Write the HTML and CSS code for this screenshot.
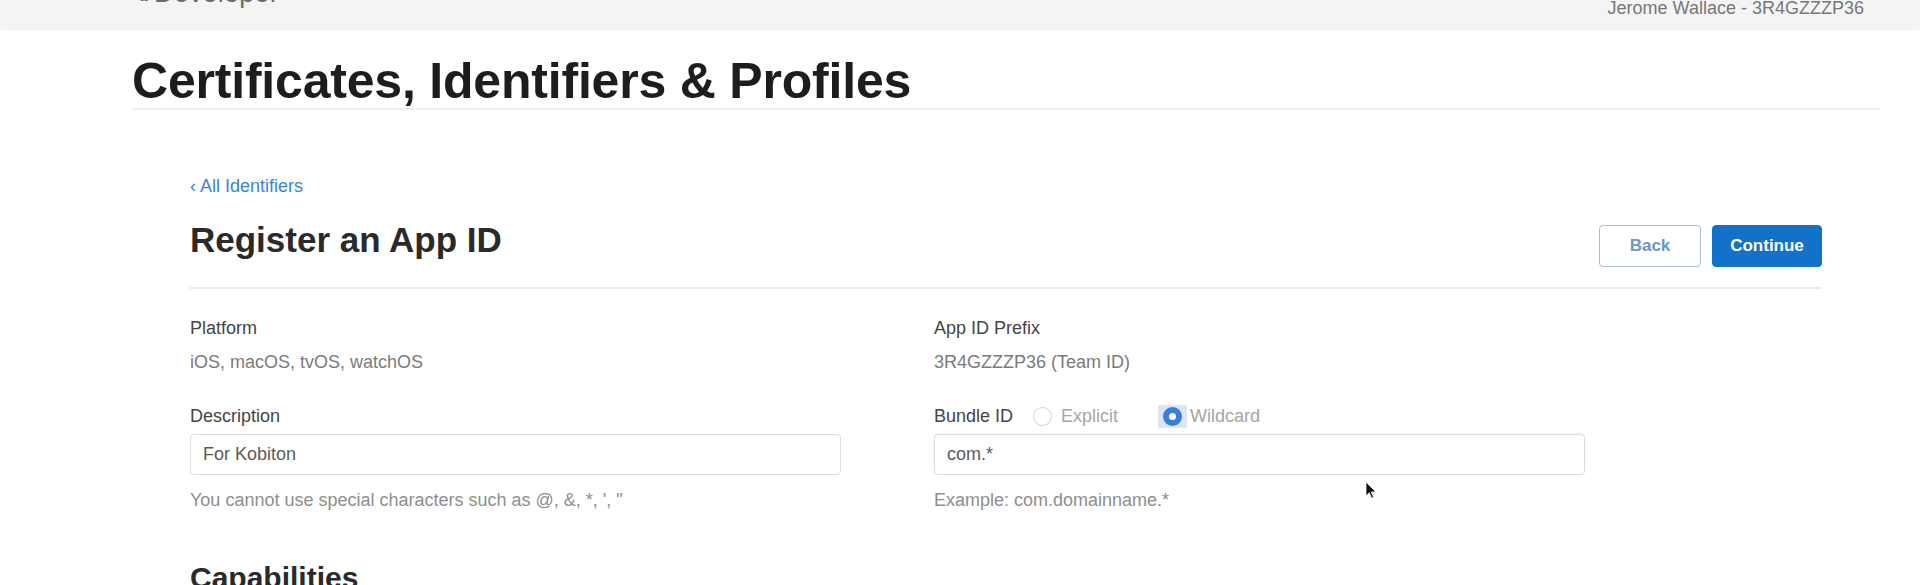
FILE: index.html
```html
<!DOCTYPE html>
<html lang="en">
<head>
<meta charset="utf-8">
<title>Certificates, Identifiers &amp; Profiles</title>
<link rel="stylesheet" href="styles.css">
</head>
<body>
<header class="topbar">
  <div class="brand">
    <svg class="brand-logo" viewBox="0 0 14 17" width="12" height="15"><path d="M11.6 9.1c0-2 1.7-3 1.8-3-1-1.4-2.5-1.6-3-1.6-1.3-.1-2.5.8-3.2.8-.7 0-1.7-.8-2.8-.7C3 4.6 1.7 5.4 1 6.7c-1.5 2.6-.4 6.4 1 8.5.7 1 1.5 2.1 2.6 2.1 1 0 1.4-.7 2.7-.7 1.2 0 1.6.7 2.7.7 1.1 0 1.8-1 2.5-2.1.8-1.2 1.1-2.3 1.1-2.4 0 0-2-.8-2-3.2zM9.6 3.1c.6-.7 1-1.7.9-2.7-.8 0-1.9.6-2.5 1.3-.5.6-1 1.6-.9 2.6.9.1 1.9-.5 2.5-1.2z" fill="#6b6b6b"/></svg>
    <span class="brand-name">Developer</span>
  </div>
  <div class="account">Jerome Wallace - 3R4GZZZP36</div>
</header>

<main class="page">
  <h1 class="page-title">Certificates, Identifiers &amp; Profiles</h1>

  <section class="panel">
    <a class="back-link" href="#"><span class="chev">‹</span> All Identifiers</a>

    <div class="panel-head">
      <h2 class="panel-title">Register an App ID</h2>
      <div class="actions">
        <button class="btn btn-secondary" type="button">Back</button>
        <button class="btn btn-primary" type="button">Continue</button>
      </div>
    </div>

    <div class="form-grid">
      <div class="field">
        <div class="label">Platform</div>
        <div class="value">iOS, macOS, tvOS, watchOS</div>
      </div>
      <div class="field">
        <div class="label">App ID Prefix</div>
        <div class="value">3R4GZZZP36 (Team ID)</div>
      </div>

      <div class="field field-input">
        <div class="label label-row">Description</div>
        <div class="input">For Kobiton</div>
        <div class="help">You cannot use special characters such as @, &amp;, *, ', "</div>
      </div>
      <div class="field field-input">
        <div class="label label-row">
          <span>Bundle ID</span>
          <span class="radio-opt radio-explicit"><span class="radio"></span><span class="radio-text">Explicit</span></span>
          <span class="radio-opt radio-wildcard"><span class="radio-focus"><span class="radio radio-on"></span></span><span class="radio-text">Wildcard</span></span>
        </div>
        <div class="input input-focus">com.*</div>
        <div class="help">Example: com.domainname.*</div>
      </div>
    </div>

    <h3 class="section-title">Capabilities</h3>
  </section>

  <svg class="cursor" viewBox="0 0 12 19" width="12" height="19"><path d="M1 1 L1 15 L4.3 11.8 L6.6 17.2 L8.6 16.3 L6.4 11 L11 11 Z" fill="#111" stroke="#fff" stroke-width="0.8"/></svg>
</main>
</body>
</html>
```

FILE: styles.css
```css
html, body {
  margin: 0;
  padding: 0;
  background: #ffffff;
}

body {
  font-family: "Liberation Sans", Arial, Helvetica, sans-serif;
  color: #333;
  height: 585px;
  overflow: hidden;
}

.topbar {
  height: 30px;
  background: #f4f4f4;
  display: flex;
  justify-content: space-between;
  align-items: flex-start;
  padding: 0 56px 0 138px;
  overflow: hidden;
  box-shadow: 0 1px 2px rgba(0,0,0,0.03);
}

.brand {
  display: flex;
  align-items: flex-end;
  gap: 4px;
  margin-top: -21px;
  height: 28px;
  line-height: 28px;
}

.brand-logo {
  margin-bottom: 6px;
}

.brand-name {
  font-size: 27px;
  color: #6b6b6b;
  letter-spacing: 0.2px;
}

.account {
  font-size: 18px;
  line-height: 18px;
  margin-top: -1px;
  color: #777;
}

.page {
  position: relative;
  padding: 24px 40px 0 132px;
}

.page-title {
  margin: 0;
  font-size: 50px;
  line-height: 54px;
  font-weight: 700;
  color: #1d1d1f;
  border-bottom: 2px solid #eeeeee;
  letter-spacing: -0.2px;
}

.panel {
  padding: 0 58px;
}

.back-link {
  display: block;
  margin-top: 66px;
  font-size: 18px;
  line-height: 20px;
  color: #3b86d4;
  text-decoration: none;
}

.panel-head {
  margin-top: 23px;
  display: flex;
  justify-content: space-between;
  align-items: flex-start;
  padding-bottom: 20px;
  border-bottom: 2px solid #ececec;
}

.panel-title {
  margin: 0;
  font-size: 35px;
  line-height: 42px;
  font-weight: 700;
  color: #2a2a2a;
}

.actions {
  display: flex;
  gap: 11px;
  margin-top: 6px;
}

.btn {
  height: 42px;
  border-radius: 4px;
  font-family: "Liberation Sans", Arial, sans-serif;
  font-size: 17px;
  font-weight: 700;
  padding: 0;
  cursor: pointer;
}

.btn-secondary {
  width: 102px;
  background: #ffffff;
  border: 1px solid #a9bcd8;
  color: #6f95cb;
}

.btn-primary {
  width: 110px;
  background: #1271c8;
  border: 1px solid #1271c8;
  color: #ffffff;
}

.form-grid {
  display: grid;
  grid-template-columns: 744px 1fr;
  margin-top: 28px;
  row-gap: 32px;
}

.label {
  font-size: 18px;
  line-height: 22px;
  color: #444;
}

.value {
  margin-top: 12px;
  font-size: 18px;
  line-height: 22px;
  color: #7b7b7b;
}

.label-row {
  display: flex;
  align-items: center;
  height: 22px;
}

.radio-opt {
  display: flex;
  align-items: center;
}

.radio-explicit {
  margin-left: 20px;
}

.radio-wildcard {
  margin-left: 40px;
}

.radio {
  box-sizing: border-box;
  display: block;
  width: 19px;
  height: 19px;
  border-radius: 50%;
  border: 1px solid #d2d2d2;
  background: #fff;
}

.radio-on {
  border: 6px solid #3a7fd6;
  background: #ffffff;
}

.radio-focus {
  display: flex;
  align-items: center;
  justify-content: center;
  width: 29px;
  height: 23px;
  background: #dae6f8;
  border-radius: 2px;
}

.radio-text {
  color: #a6a6a6;
  font-size: 18px;
}

.radio-explicit .radio-text {
  margin-left: 9px;
}

.radio-wildcard .radio-text {
  margin-left: 3px;
}

.input {
  box-sizing: border-box;
  margin-top: 7px;
  width: 651px;
  height: 41px;
  border: 1px solid #dcdcdc;
  border-radius: 4px;
  padding: 0 12px;
  font-size: 18px;
  line-height: 39px;
  color: #5a5a5a;
  background: #fff;
}

.input-focus {
  box-shadow: 0 -1px 2px rgba(90, 150, 230, 0.12);
}

.help {
  margin-top: 14px;
  font-size: 18px;
  line-height: 22px;
  color: #8e8e8e;
}

.section-title {
  margin: 49px 0 0;
  font-size: 30px;
  line-height: 36px;
  font-weight: 700;
  color: #2a2a2a;
}

.cursor {
  position: absolute;
  left: 1365px;
  top: 451px;
}
```
